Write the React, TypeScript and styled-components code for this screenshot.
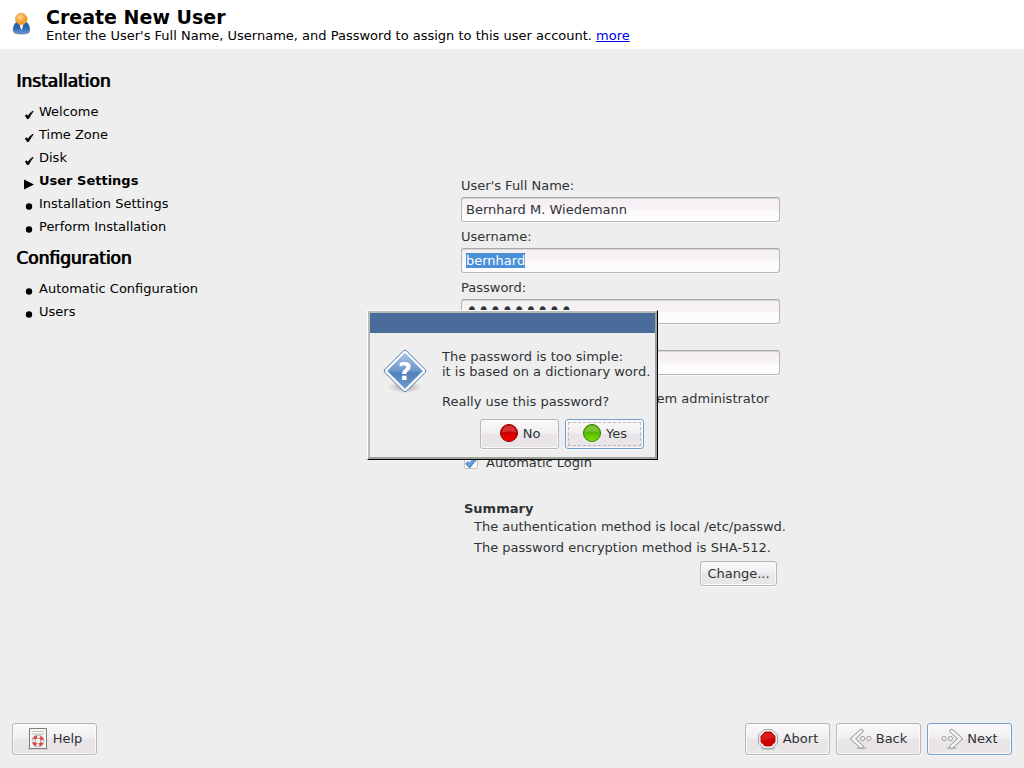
import React, { useEffect, useRef } from "react";
import styled, { createGlobalStyle, css } from "styled-components";

const GlobalStyle = createGlobalStyle`
  *, *::before, *::after { box-sizing: border-box; }
  body {
    margin: 0;
    background: #eeeeee;
    color: #2e3436;
    font-family: "DejaVu Sans", sans-serif;
    font-size: 13px;
    line-height: 15px;
  }
  button, input { font: inherit; color: inherit; }
  h1, h2, h3, p, ul { margin: 0; padding: 0; }
`;

const Page = styled.div`
  display: flex;
  flex-direction: column;
  min-height: 100vh;
`;

const Header = styled.header`
  display: flex;
  gap: 12px;
  height: 49px;
  padding: 6px 8px;
  background: #ffffff;
  color: #000000;
`;

const HeaderIcon = styled.svg`
  flex: none;
  width: 26px;
  height: 36px;
`;

const Title = styled.h1`
  font-size: 19px;
  line-height: 22px;
  font-weight: bold;
`;

const MoreLink = styled.a`
  color: #0000ee;
  text-decoration: underline;
`;

const Body = styled.div`
  display: flex;
  flex: 1;
`;

const Sidebar = styled.nav`
  flex: none;
  width: 217px;
  padding: 21px 16px;
  color: #000000;
`;

const StageTitle = styled.h2`
  font-size: 17px;
  line-height: 22px;
  font-weight: normal;
  text-shadow: 1px 0 0 #000000;
`;

const StepList = styled.ul`
  list-style: none;
  padding: 8px 0 9px 7px;
`;

const Step = styled.li<{ $current?: boolean }>`
  display: flex;
  gap: 4px;
  height: 23px;
  line-height: 23px;
  white-space: nowrap;
  font-weight: ${(p) => (p.$current ? "bold" : "normal")};
`;

const StepMark = styled.svg`
  flex: none;
  width: 12px;
  height: 23px;
`;

const Main = styled.main`
  display: flex;
  flex: 1;
  flex-direction: column;
  align-items: center;
  justify-content: center;
  padding-top: 4px;
`;

const Form = styled.form`
  display: flex;
  flex-direction: column;
  width: 319px;
`;

const Field = styled.div`
  display: flex;
  flex-direction: column;
  gap: 4px;
  padding-bottom: 7px;
`;

const Label = styled.label`
  line-height: 15px;
`;

const TextInput = styled.input`
  width: 100%;
  height: 25px;
  padding: 0 4px;
  border: 1px solid #b6b6b6;
  border-top-color: #a9a7a8;
  border-radius: 3px;
  outline: none;
  background: linear-gradient(#f3eff2 0, #f7f3f6 50%, #fdfafd 51%, #fefcfe 100%);
  box-shadow: inset 0 1px 0 #d6d4d5, 0 1px 0 #fafafa;
  &[type="password"] {
    padding-bottom: 5px;
    font-size: 20px;
    line-height: 18px;
  }
  &::selection { background: #4a90d9; color: #ffffff; }
`;

const Checks = styled.div`
  display: flex;
  flex-direction: column;
  gap: 17px;
  padding: 9px 0 0 3px;
`;

const CheckLabel = styled.label`
  display: flex;
  align-items: center;
  gap: 8px;
  white-space: nowrap;
`;

const CheckBox = styled.input`
  appearance: none;
  width: 14px;
  height: 14px;
  margin: 0;
  border: 1px solid #c4c2c3;
  border-radius: 2px;
  background: #fdfafd;
`;

const CheckCell = styled.span`
  display: grid;
  width: 14px;
  height: 15px;
  & > * { grid-area: 1 / 1; }
`;

const Tick = styled.svg`
  width: 14px;
  height: 14px;
  pointer-events: none;
`;

const Summary = styled.section`
  display: flex;
  flex-direction: column;
  padding: 31px 3px 0;
  white-space: nowrap;
`;

const SummaryTitle = styled.h3`
  font-size: 13px;
  line-height: 15px;
  font-weight: bold;
`;

const SummaryLine = styled.p`
  padding-left: 10px;
  line-height: 21px;
`;

const buttonFace = css<{ $default?: boolean }>`
  border: 1px solid ${(p) => (p.$default ? "#729fcf" : "#b8b6b7")};
  border-radius: 3px;
  background: linear-gradient(#fbf9fb 0, #f0edef 49%, #e8e4e7 51%, #e9e6e8 100%);
  box-shadow: inset 0 0 0 1px #faf8fa, 0 1px 0 #fafafa;
`;

const PushButton = styled.button<{ $default?: boolean }>`
  ${buttonFace}
  display: flex;
  align-items: center;
  justify-content: center;
  gap: 4px;
  min-width: 85px;
  height: 32px;
  padding: 0 6px 1px;
`;

const ChangeButton = styled(PushButton)`
  align-self: flex-end;
  min-width: 77px;
  height: 25px;
  margin-top: 3px;
`;

const DialogButton = styled(PushButton)`
  min-width: 79px;
  height: 30px;
  ${(p) => p.$default && "outline: 1px dashed #bdbabc; outline-offset: -4px;"}
`;

const Footer = styled.footer`
  display: flex;
  gap: 6px;
  padding: 12px 12px 13px;
`;

const Spacer = styled.div`
  flex: 1;
`;

const Overlay = styled.div`
  position: fixed;
  inset: 0;
  z-index: 1;
  display: flex;
  align-items: center;
  justify-content: center;
  padding: 1px 0 0 1px;
`;

const Dialog = styled.section`
  width: 291px;
  border: 1px solid;
  border-color: #ffffff #000000 #000000 #ffffff;
  background: #eeeeee;
`;

const DialogFrame = styled.div`
  border: 2px solid;
  border-color: #b9beb4 #9ca297 #9ca297 #b9beb4;
`;

const TitleBar = styled.div`
  height: 20px;
  background: #4a6c9b;
`;

const DialogContent = styled.div`
  display: flex;
  gap: 15px;
  padding: 16px 4px 0 13px;
`;

const QuestionIcon = styled.svg`
  flex: none;
  width: 44px;
  height: 46px;
  font-size: 24px;
  font-weight: bold;
`;

const Message = styled.p`
  white-space: pre;
`;

const DialogActions = styled.div`
  display: flex;
  justify-content: flex-end;
  gap: 6px;
  padding: 10px 11px 8px;
`;

const Icon = styled.svg<{ $size: number }>`
  flex: none;
  width: ${(p) => p.$size}px;
  height: ${(p) => p.$size}px;
`;

type Mark = "done" | "current" | "pending";

const stages: { title: string; steps: [string, Mark][] }[] = [
  {
    title: "Installation",
    steps: [
      ["Welcome", "done"],
      ["Time Zone", "done"],
      ["Disk", "done"],
      ["User Settings", "current"],
      ["Installation Settings", "pending"],
      ["Perform Installation", "pending"],
    ],
  },
  {
    title: "Configuration",
    steps: [
      ["Automatic Configuration", "pending"],
      ["Users", "pending"],
    ],
  },
];

const StepIcon = ({ mark }: { mark: Mark }) => (
  <StepMark viewBox="0 0 12 23" aria-hidden="true">
    {mark === "done" && (
      <path
        d="M2.300 15.600 3.700 14.700 5 16.400C6.200 14 7.800 12.200 10 11.200L10.200 11.600C8.600 13.400 7 16 5.800 18.400L4.200 18.700Z"
        stroke="#000"
        strokeWidth=".7"
        strokeLinejoin="round"
      />
    )}
    {mark === "current" && <path d="M1 10.500v10l10-5z" />}
    {mark === "pending" && <circle cx="6" cy="14.500" r="3.200" />}
  </StepMark>
);

const UserIcon = () => (
  <HeaderIcon viewBox="0 0 26 36" aria-hidden="true">
    <defs>
      <linearGradient id="suit" x2="0" y2="1">
        <stop offset="0" stopColor="#1f56a3" />
        <stop offset=".6" stopColor="#2f6ab5" />
        <stop offset="1" stopColor="#6a9cd6" />
      </linearGradient>
      <radialGradient id="face" cx=".4" cy=".35">
        <stop offset="0" stopColor="#ffd78c" />
        <stop offset="1" stopColor="#f39a1f" />
      </radialGradient>
    </defs>
    <ellipse cx="13.500" cy="26.800" rx="8.500" ry="2" fill="#000" opacity=".18" />
    <path d="M5.300 24c0-4.500 2-8 5-8.500h6c3.500.5 5.300 4 5.300 8.500 0 2.600-2 3.500-8.100 3.500s-8.200-.9-8.200-3.500z" fill="url(#suit)" stroke="#3566a6" strokeWidth=".7" />
    <path d="M11.400 17.500h4.200l-1.600 6h-1z" fill="#fff" />
    <circle cx="13.300" cy="13" r="5.800" fill="url(#face)" stroke="#dda054" strokeWidth=".8" />
  </HeaderIcon>
);

const Ball = ({ id, light, base, edge }: { id: string; light: string; base: string; edge: string }) => (
  <Icon $size={20} viewBox="0 0 20 20" aria-hidden="true">
    <defs>
      <linearGradient id={id} x2="0" y2="1">
        <stop offset="0" stopColor={base} />
        <stop offset=".45" stopColor={base} />
        <stop offset="1" stopColor={light} />
      </linearGradient>
    </defs>
    <circle cx="10" cy="10" r="8.500" fill={`url(#${id})`} stroke={edge} />
    <path d="M3 9.500a7 7 0 0 1 14 0C13 8 7 8 3 9.500z" fill="#fff" opacity=".2" />
  </Icon>
);

const AbortIcon = () => (
  <Icon $size={22} viewBox="0 0 22 22" aria-hidden="true">
    <ellipse cx="11" cy="20.300" rx="7.500" ry="1.500" fill="#000" opacity=".25" />
    <path d="M7 1.500h8L20.500 7v8L15 20.500H7L1.500 15V7z" fill="#eeeeec" stroke="#a2a49f" />
    <path d="M8 4h6l4 4v6l-4 4H8l-4-4V8z" fill="#d40000" stroke="#a80000" strokeWidth=".8" />
    <path d="M8.200 4.800h5.600l3.400 3.400v2c-4 .3-8 .8-12.400 2.800V8.200z" fill="#fff" opacity=".1" />
  </Icon>
);

const ArrowIcon = ({ forward }: { forward?: boolean }) => (
  <Icon $size={22} viewBox="0 0 22 22" aria-hidden="true">
    <g transform={forward ? "translate(22 0) scale(-1 1)" : undefined} fill="none">
      <ellipse cx="11.500" cy="20" rx="5" ry="1.200" fill="#000" opacity=".18" />
      <path d="M11.300 3 3 10.800l8.300 7.700" stroke="#91938f" strokeWidth="4.400" strokeLinejoin="miter" strokeLinecap="round" />
      <path d="M11.300 3 3 10.800l8.300 7.700" stroke="#f6f5f5" strokeWidth="2.800" strokeLinejoin="miter" strokeLinecap="round" />
      <circle cx="12.600" cy="10.500" r="2.100" fill="#f3f2f2" stroke="#91938f" strokeWidth=".9" />
      <circle cx="18.900" cy="10.500" r="2.100" fill="#f3f2f2" stroke="#91938f" strokeWidth=".9" />
    </g>
  </Icon>
);

const HelpIcon = () => (
  <Icon $size={22} viewBox="0 0 22 22" aria-hidden="true">
    <path d="M1 20h20v1.500H1z" fill="#000" opacity=".2" />
    <path d="M2.500.5h17v20h-17z" fill="#f5f5f3" stroke="#7d7f7a" />
    <path d="M5 3.500h12M5 6h12" stroke="#c3c5c0" />
    <g fill="none">
      <circle cx="11" cy="13" r="4.300" stroke="#8d8f8a" strokeWidth="3.800" />
      <circle cx="11" cy="13" r="4.300" stroke="#f6f4f4" strokeWidth="2.800" />
      <circle cx="11" cy="13" r="4.300" stroke="#e64545" strokeWidth="2.800" strokeDasharray="3.800 2.954" strokeDashoffset="-1.500" />
    </g>
  </Icon>
);

const Question = () => (
  <QuestionIcon viewBox="0 0 44 46" aria-hidden="true">
    <defs>
      <linearGradient id="sign" x2="0" y2="1">
        <stop offset="0" stopColor="#a9c4e3" />
        <stop offset=".5" stopColor="#6a96ca" />
        <stop offset=".55" stopColor="#5080ba" />
        <stop offset="1" stopColor="#6d9bd0" />
      </linearGradient>
      <radialGradient id="shade">
        <stop offset="0" stopColor="#000" stopOpacity=".3" />
        <stop offset="1" stopColor="#000" stopOpacity="0" />
      </radialGradient>
    </defs>
    <ellipse cx="22" cy="38" rx="17" ry="6" fill="url(#shade)" />
    <path d="M20.600 1.800a2 2 0 0 1 2.800 0l18.800 18.800a2 2 0 0 1 0 2.800L23.400 42.200a2 2 0 0 1-2.800 0L1.800 23.400a2 2 0 0 1 0-2.800z" fill="#fff" stroke="#3f73b3" />
    <path d="M22 4.500 39.500 22 22 39.500 4.500 22z" fill="url(#sign)" stroke="#5b8ac2" strokeWidth=".6" />
    <text x="22" y="31" textAnchor="middle" fill="#fff">?</text>
  </QuestionIcon>
);

const Check = ({ id, label }: { id: string; label: string }) => (
  <CheckLabel htmlFor={id}>
    <CheckCell>
      <CheckBox id={id} type="checkbox" defaultChecked />
      <Tick viewBox="0 0 14 14" aria-hidden="true">
        <path d="M2.500 7.500 5.500 10.500 12 3" fill="none" stroke="#3b74b8" strokeWidth="3.600" />
        <path d="M3 7.800 5.500 10.200 11.600 3.300" fill="none" stroke="#6aa5e3" strokeWidth="2" />
      </Tick>
    </CheckCell>
    {label}
  </CheckLabel>
);

export default function App() {
  const username = useRef<HTMLInputElement>(null);

  useEffect(() => {
    username.current?.focus();
    username.current?.select();
  }, []);

  return (
    <Page>
      <GlobalStyle />
      <Header>
        <UserIcon />
        <div>
          <Title>Create New User</Title>
          <p>
            Enter the User's Full Name, Username, and Password to assign to this user account.{" "}
            <MoreLink href="#more">more</MoreLink>
          </p>
        </div>
      </Header>
      <Body>
        <Sidebar>
          {stages.map((stage) => (
            <section key={stage.title}>
              <StageTitle>{stage.title}</StageTitle>
              <StepList>
                {stage.steps.map(([name, mark]) => (
                  <Step key={name} $current={mark === "current"}>
                    <StepIcon mark={mark} />
                    {name}
                  </Step>
                ))}
              </StepList>
            </section>
          ))}
        </Sidebar>
        <Main>
          <Form>
            <Field>
              <Label htmlFor="fullname">User's Full Name:</Label>
              <TextInput id="fullname" defaultValue="Bernhard M. Wiedemann" />
            </Field>
            <Field>
              <Label htmlFor="username">Username:</Label>
              <TextInput id="username" ref={username} spellCheck={false} defaultValue="bernhard" />
            </Field>
            <Field>
              <Label htmlFor="password">Password:</Label>
              <TextInput id="password" type="password" defaultValue="password1" />
            </Field>
            <Field>
              <Label htmlFor="confirm">Confirm Password:</Label>
              <TextInput id="confirm" type="password" defaultValue="password1" />
            </Field>
            <Checks>
              <Check id="admin" label="Use this password for system administrator" />
              <Check id="mail" label="Receive System Mail" />
              <Check id="autologin" label="Automatic Login" />
            </Checks>
            <Summary>
              <SummaryTitle>Summary</SummaryTitle>
              <SummaryLine>The authentication method is local /etc/passwd.</SummaryLine>
              <SummaryLine>The password encryption method is SHA-512.</SummaryLine>
              <ChangeButton type="button">Change...</ChangeButton>
            </Summary>
          </Form>
        </Main>
      </Body>
      <Footer>
        <PushButton type="button"><HelpIcon />Help</PushButton>
        <Spacer />
        <PushButton type="button"><AbortIcon />Abort</PushButton>
        <PushButton type="button"><ArrowIcon />Back</PushButton>
        <PushButton type="button" $default><ArrowIcon forward />Next</PushButton>
      </Footer>
      <Overlay>
        <Dialog role="dialog" aria-modal="true" aria-describedby="question">
          <DialogFrame>
            <TitleBar />
            <DialogContent>
              <Question />
              <Message id="question">
                {"The password is too simple:\nit is based on a dictionary word.\n\nReally use this password?"}
              </Message>
            </DialogContent>
            <DialogActions>
              <DialogButton type="button">
                <Ball id="red" light="#f80000" base="#c80000" edge="#8c0000" />
                No
              </DialogButton>
              <DialogButton type="button" $default>
                <Ball id="green" light="#7be800" base="#56b400" edge="#3c7a06" />
                Yes
              </DialogButton>
            </DialogActions>
          </DialogFrame>
        </Dialog>
      </Overlay>
    </Page>
  );
}
